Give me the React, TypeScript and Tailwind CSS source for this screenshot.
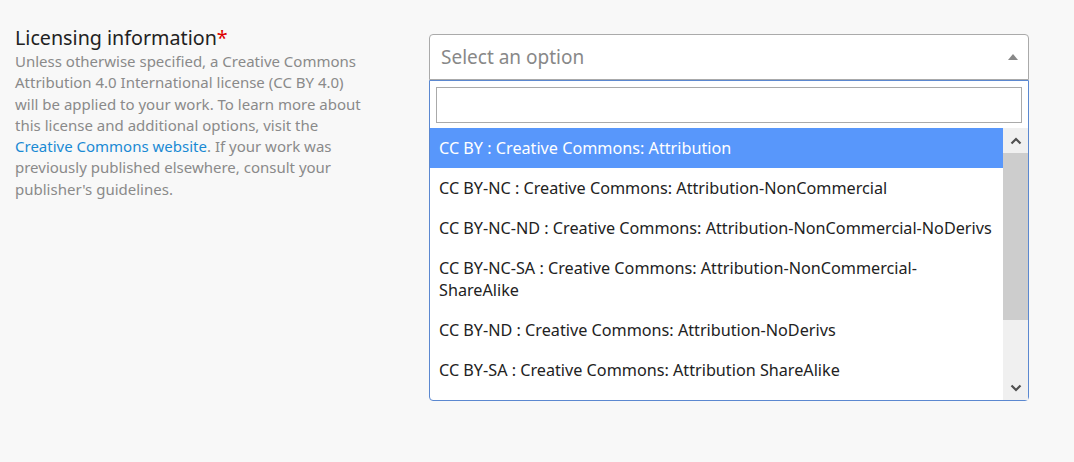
import { useState } from "react";

const OPTIONS = [
  "CC BY : Creative Commons: Attribution",
  "CC BY-NC : Creative Commons: Attribution-NonCommercial",
  "CC BY-NC-ND : Creative Commons: Attribution-NonCommercial-NoDerivs",
  "CC BY-NC-SA : Creative Commons: Attribution-NonCommercial-ShareAlike",
  "CC BY-ND : Creative Commons: Attribution-NoDerivs",
  "CC BY-SA : Creative Commons: Attribution ShareAlike",
  "CC0 : Creative Commons: Public Domain Dedication",
];

function Chevron({ up }: { up?: boolean }) {
  return (
    <svg width="12" height="8" viewBox="0 0 12 8" className="block">
      <path
        d={up ? "M1.5 6.5 L6 2 L10.5 6.5" : "M1.5 1.5 L6 6 L10.5 1.5"}
        fill="none"
        stroke="#505050"
        strokeWidth="2.2"
      />
    </svg>
  );
}

export default function App() {
  const [active] = useState(0);

  return (
    <div className="min-h-[462px] bg-[#f8f8f8] font-['Noto_Sans',sans-serif]">
      <div className="flex px-[15px] pt-[25px]">
        <div className="w-[348px] shrink-0">
          <h2 className="text-[19.7px] leading-[26px] text-[#222]">
            Licensing information<span className="text-[#d00]">*</span>
          </h2>
          <p className="text-[15px] leading-[21.3px] text-[#8a8a8a]">
            Unless otherwise specified, a Creative Commons Attribution 4.0
            International license (CC BY 4.0) will be applied to your work. To
            learn more about this license and additional options, visit the{" "}
            <a className="text-[#1a8ad4]">Creative Commons website</a>. If your
            work was previously published elsewhere, consult your publisher's
            guidelines.
          </p>
        </div>

        <div className="ml-[66px] mt-[9px] w-[600px] shrink-0">
          <div className="flex h-[46px] items-center justify-between rounded-t-[4px] border border-[#aaa] bg-white pl-[11px] pr-[10px]">
            <span className="text-[19px] text-[#888]">Select an option</span>
            <svg width="10" height="6" viewBox="0 0 10 6">
              <path d="M0 6 L5 0 L10 6 Z" fill="#888" />
            </svg>
          </div>

          <div className="rounded-b-[4px] border border-t-1 border-[#5b88d0] bg-white">
            <div className="p-[6px] pb-[5px]">
              <div className="h-[36px] border border-[#aaa] bg-white" />
            </div>
            <div className="flex h-[272px]">
              <ul className="flex-1 overflow-hidden text-[16.2px] leading-[22px] text-[#222]">
                {OPTIONS.map((o, i) => (
                  <li
                    key={o}
                    className={
                      i === active
                        ? "bg-[#5897fb] py-[9px] pl-[9px] pr-[8px] text-white"
                        : "py-[9px] pl-[9px] pr-[8px]"
                    }
                  >
                    {o}
                  </li>
                ))}
              </ul>
              <div className="flex w-[25px] flex-col bg-[#f0f0f0]">
                <div className="flex h-[25px] items-center justify-center">
                  <Chevron up />
                </div>
                <div className="h-[167px] bg-[#cdcdcd]" />
                <div className="flex-1" />
                <div className="flex h-[25px] items-center justify-center">
                  <Chevron />
                </div>
              </div>
            </div>
          </div>
        </div>
      </div>
    </div>
  );
}
